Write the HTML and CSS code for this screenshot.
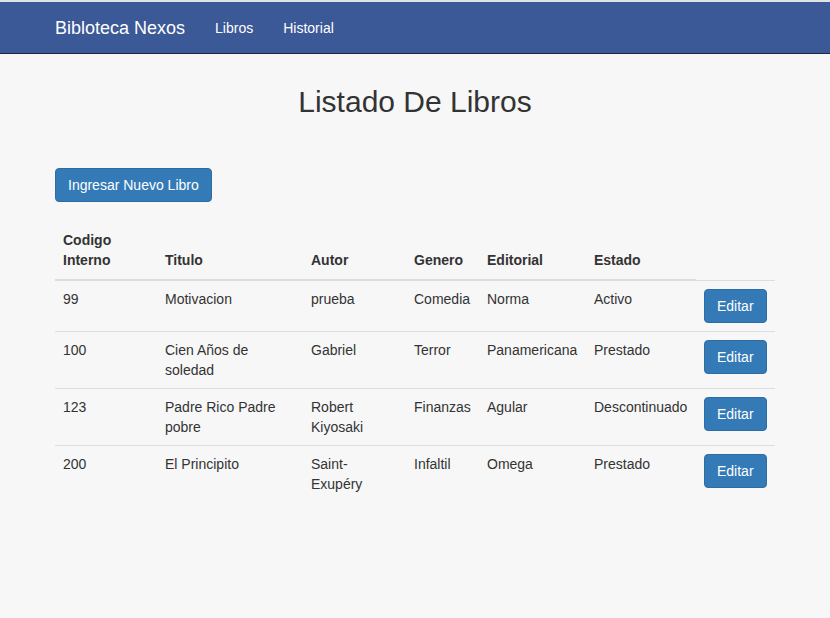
FILE: index.html
```html
<!DOCTYPE html>
<html lang="es">
<head>
<meta charset="utf-8">
<title>Bibloteca Nexos</title>
<link rel="stylesheet" href="styles.css">
</head>
<body>
<nav class="navbar">
  <div class="container nav-inner">
    <a class="brand" href="#">Bibloteca Nexos</a>
    <a class="nav-link" href="#">Libros</a>
    <a class="nav-link" href="#">Historial</a>
  </div>
</nav>
<main class="container">
  <h1 class="title">Listado De Libros</h1>
  <button class="btn btn-new">Ingresar Nuevo Libro</button>
  <table class="table">
    <colgroup>
      <col class="c1"><col class="c2"><col class="c3"><col class="c4"><col class="c5"><col class="c6"><col class="c7">
    </colgroup>
    <thead>
      <tr><th>Codigo Interno</th><th>Titulo</th><th>Autor</th><th>Genero</th><th>Editorial</th><th>Estado</th></tr>
    </thead>
    <tbody>
      <tr><td>99</td><td>Motivacion</td><td>prueba</td><td>Comedia</td><td>Norma</td><td>Activo</td><td><button class="btn">Editar</button></td></tr>
      <tr><td>100</td><td>Cien Años de soledad</td><td>Gabriel</td><td>Terror</td><td>Panamericana</td><td>Prestado</td><td><button class="btn">Editar</button></td></tr>
      <tr><td>123</td><td>Padre Rico Padre pobre</td><td>Robert Kiyosaki</td><td>Finanzas</td><td>Agular</td><td>Descontinuado</td><td><button class="btn">Editar</button></td></tr>
      <tr><td>200</td><td>El Principito</td><td>Saint-Exupéry</td><td>Infaltil</td><td>Omega</td><td>Prestado</td><td><button class="btn">Editar</button></td></tr>
    </tbody>
  </table>
</main>
</body>
</html>
```
FILE: styles.css
```css
* { box-sizing: border-box; }
html, body { margin: 0; padding: 0; }
body {
  background: #f7f7f7;
  font-family: "Liberation Sans", Arial, sans-serif;
  font-size: 14px;
  line-height: 20px;
  color: #333;
  border-top: 2px solid #e2e2e2;
  min-height: 618px;
}
.container {
  width: 750px;
  margin: 0 auto;
  padding: 0 15px;
}
.navbar {
  background: #3b5897;
  border-bottom: 1px solid #1c2a48;
  height: 52px;
}
.nav-inner {
  display: flex;
  align-items: center;
  height: 51px;
}
.brand {
  color: #fff;
  font-size: 18px;
  text-decoration: none;
  padding-right: 15px;
}
.nav-link {
  color: #fff;
  text-decoration: none;
  padding: 0 15px;
}
.title {
  font-size: 30px;
  font-weight: 400;
  text-align: center;
  margin: 31px 0 50px;
  line-height: 33px;
  color: #333;
}
.btn {
  display: inline-block;
  font-family: inherit;
  font-size: 14px;
  line-height: 20px;
  padding: 6px 12px;
  color: #fff;
  background: #337ab7;
  border: 1px solid #2e6da4;
  border-radius: 4px;
}
.btn-new { margin-bottom: 20px; }
.table {
  width: 720px;
  border-collapse: collapse;
  border-spacing: 0;
  table-layout: fixed;
}
.c1 { width: 102px; }
.c2 { width: 146px; }
.c3 { width: 103px; }
.c4 { width: 73px; }
.c5 { width: 107px; }
.c6 { width: 110px; }
.c7 { width: 79px; }
.table th {
  text-align: left;
  font-weight: 700;
  vertical-align: bottom;
  padding: 8px 8px 9px;
  border-bottom: 2px solid #ddd;
}
.table td {
  vertical-align: top;
  padding: 8px;
  border-top: 1px solid #ddd;
}
```
